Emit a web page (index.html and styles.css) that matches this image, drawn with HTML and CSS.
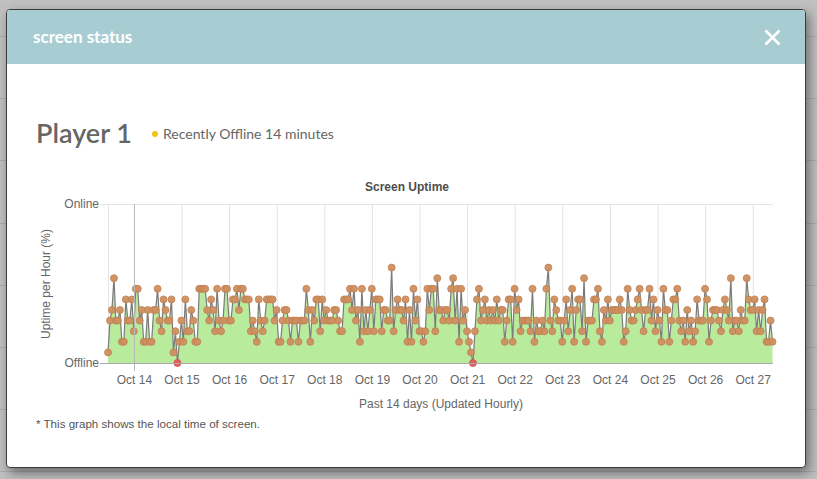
FILE: index.html
```html
<!DOCTYPE html>
<html lang="en">
<head>
<meta charset="utf-8">
<title>screen status</title>
<link rel="stylesheet" href="styles.css">
</head>
<body>
<div class="backdrop">
  <div class="modal">
    <div class="modal-header">
      <h4 class="modal-title">screen status</h4>
      <button class="close" aria-label="Close">
        <svg width="17" height="17" viewBox="0 0 17 17"><path d="M1.5 1.5 L15.5 15.5 M15.5 1.5 L1.5 15.5" stroke="#fff" stroke-width="2.6" stroke-linecap="butt"/></svg>
      </button>
    </div>
    <div class="modal-body">
      <div class="player-row">
        <h2 class="player-name">Player 1</h2>
        <span class="status"><span class="status-dot"></span>Recently Offline 14 minutes</span>
      </div>
      <svg class="chart" width="760" height="247" viewBox="36 170 760 247">
        <text class="chart-title" x="407" y="191" text-anchor="middle">Screen Uptime</text>
        <g class="grid">
          <line x1="100" x2="773" y1="204.5" y2="204.5"/>
          <line x1="108.5" x2="108.5" y1="204" y2="363"/>
          <line x1="182" x2="182" y1="204" y2="363"/>
          <line x1="229.6" x2="229.6" y1="204" y2="363"/>
          <line x1="277.2" x2="277.2" y1="204" y2="363"/>
          <line x1="324.8" x2="324.8" y1="204" y2="363"/>
          <line x1="372.4" x2="372.4" y1="204" y2="363"/>
          <line x1="420" x2="420" y1="204" y2="363"/>
          <line x1="467.6" x2="467.6" y1="204" y2="363"/>
          <line x1="515.2" x2="515.2" y1="204" y2="363"/>
          <line x1="562.8" x2="562.8" y1="204" y2="363"/>
          <line x1="610.4" x2="610.4" y1="204" y2="363"/>
          <line x1="658" x2="658" y1="204" y2="363"/>
          <line x1="705.6" x2="705.6" y1="204" y2="363"/>
          <line x1="753.2" x2="753.2" y1="204" y2="363"/>
        </g>
        <g id="series"></g>
        <line class="cursor" x1="134.5" x2="134.5" y1="204" y2="371"/>
        <line class="axis" x1="100" x2="773" y1="363.5" y2="363.5"/>
        <g class="ylabels">
          <text x="99" y="208" text-anchor="end">Online</text>
          <text x="99" y="367" text-anchor="end">Offline</text>
        </g>
        <text class="axis-title" transform="translate(50 284) rotate(-90)" text-anchor="middle">Uptime per Hour (%)</text>
        <g class="xlabels" text-anchor="middle">
          <text x="134.4" y="384">Oct 14</text>
          <text x="182" y="384">Oct 15</text>
          <text x="229.6" y="384">Oct 16</text>
          <text x="277.2" y="384">Oct 17</text>
          <text x="324.8" y="384">Oct 18</text>
          <text x="372.4" y="384">Oct 19</text>
          <text x="420" y="384">Oct 20</text>
          <text x="467.6" y="384">Oct 21</text>
          <text x="515.2" y="384">Oct 22</text>
          <text x="562.8" y="384">Oct 23</text>
          <text x="610.4" y="384">Oct 24</text>
          <text x="658" y="384">Oct 25</text>
          <text x="705.6" y="384">Oct 26</text>
          <text x="753.2" y="384">Oct 27</text>
        </g>
        <text class="axis-title" x="441" y="408" text-anchor="middle">Past 14 days (Updated Hourly)</text>
      </svg>
      <p class="footnote">* This graph shows the local time of screen.</p>
    </div>
  </div>
</div>
<script src="script.js"></script>
</body>
</html>
```
FILE: styles.css
```css
html, body {
  margin: 0;
  padding: 0;
}
body {
  width: 817px;
  height: 479px;
  overflow: hidden;
  background-color: #c0c0c0;
  background-image: repeating-linear-gradient(180deg, transparent 0, transparent 36px, #acacac 36px, #acacac 37px, transparent 37px, transparent 62.2px);
  font-family: Lato, "Open Sans", sans-serif;
}
.backdrop {
  padding: 9px 0 0 6px;
}
.modal {
  width: 800px;
  height: 459px;
  box-sizing: border-box;
  border: 1px solid #3c3c3c;
  border-radius: 4px;
  background: #fff;
  box-shadow: 3px 5px 12px rgba(0, 0, 0, 0.45);
  overflow: hidden;
}
.modal-header {
  height: 54px;
  background: #a7cdd2;
  display: flex;
  align-items: center;
  justify-content: space-between;
  padding: 0 24px 0 26px;
}
.modal-title {
  margin: 0;
  color: #fff;
  font-size: 17px;
  font-weight: 700;
  line-height: 20px;
}
.close {
  border: 0;
  background: none;
  padding: 0;
  width: 17px;
  height: 17px;
  display: flex;
}
.modal-body {
  padding: 54px 0 0 29px;
}
.player-row {
  display: flex;
  align-items: center;
  height: 30px;
}
.player-name {
  margin: 0;
  font-size: 27px;
  font-weight: 600;
  color: #666;
  line-height: 30px;
}
.status {
  margin-left: 20px;
  display: flex;
  align-items: center;
  font-size: 14px;
  color: #666;
  padding-top: 1px;
}
.status-dot {
  width: 6px;
  height: 6px;
  border-radius: 50%;
  background: #f1c40f;
  margin-right: 5px;
}
.chart {
  display: block;
  margin-top: 22px;
  font-family: "Liberation Sans", Arial, sans-serif;
  font-size: 12px;
}
.chart-title {
  font-weight: 700;
  fill: #4d4d4d;
}
.grid line {
  stroke: #e4e4e4;
  stroke-width: 1;
}
.cursor {
  stroke: #b8b8b8;
  stroke-width: 1;
}
.axis {
  stroke: #aaa;
  stroke-width: 1;
}
.ylabels text,
.xlabels text,
.axis-title {
  fill: #666;
}
.area {
  fill: #b8eb9c;
}
.line {
  fill: none;
  stroke: #7b7b7b;
  stroke-width: 1.2;
}
.dot {
  fill: #cf8f60;
  stroke: #c08052;
  stroke-width: 0.8;
  fill-opacity: 0.95;
}
.dot-off {
  fill: #e4605a;
  stroke: #d04d47;
  stroke-width: 0.8;
}
.footnote {
  margin: 0;
  font-family: "Liberation Sans", Arial, sans-serif;
  font-size: 11.6px;
  line-height: 14px;
  color: #555;
}
```
FILE: script.js
```js
(function () {
  var NS = 'http://www.w3.org/2000/svg';
  var g = document.getElementById('series');
  var seed = 20231027;
  function rnd() {
    seed |= 0; seed = seed + 0x6D2B79F5 | 0;
    var t = Math.imul(seed ^ seed >>> 15, 1 | seed);
    t = t + Math.imul(t ^ t >>> 7, 61 | t) ^ t;
    return ((t ^ t >>> 14) >>> 0) / 4294967296;
  }
  var weights = [[2, .09], [3, .15], [4, .25], [5, .22], [6, .16], [7, .09], [8, .035], [9, .005]];
  var n = 336, vals = [];
  for (var i = 0; i < n; i++) {
    var r = rnd(), acc = 0, v = 5;
    for (var k = 0; k < weights.length; k++) {
      acc += weights[k][1];
      if (r < acc) { v = weights[k][0]; break; }
    }
    if (v === 9) v = 7;
    vals.push(v);
  }
  var fixed = {0: 1, 1: 4, 33: 1, 34: 3, 35: 0, 36: 2, 143: 9, 181: 3, 182: 2, 183: 1, 184: 0, 185: 3, 222: 9, 314: 8};
  for (var key in fixed) vals[+key] = fixed[key];
  var x0 = 108, x1 = 772.5, dx = (x1 - x0) / (n - 1), yb = 363, step = (363 - 204) / 15;
  var pts = vals.map(function (v, i) { return [x0 + i * dx, yb - v * step]; });
  var d = pts.map(function (p, i) { return (i ? 'L' : 'M') + p[0].toFixed(2) + ' ' + p[1].toFixed(2); }).join(' ');
  var area = document.createElementNS(NS, 'path');
  area.setAttribute('d', d + ' L' + x1 + ' ' + yb + ' L' + x0 + ' ' + yb + ' Z');
  area.setAttribute('class', 'area');
  g.appendChild(area);
  var line = document.createElementNS(NS, 'path');
  line.setAttribute('d', d);
  line.setAttribute('class', 'line');
  g.appendChild(line);
  pts.forEach(function (p, i) {
    var c = document.createElementNS(NS, 'circle');
    c.setAttribute('cx', p[0].toFixed(2));
    c.setAttribute('cy', p[1].toFixed(2));
    c.setAttribute('r', '3.5');
    c.setAttribute('class', vals[i] === 0 ? 'dot-off' : 'dot');
    g.appendChild(c);
  });
})();
```
